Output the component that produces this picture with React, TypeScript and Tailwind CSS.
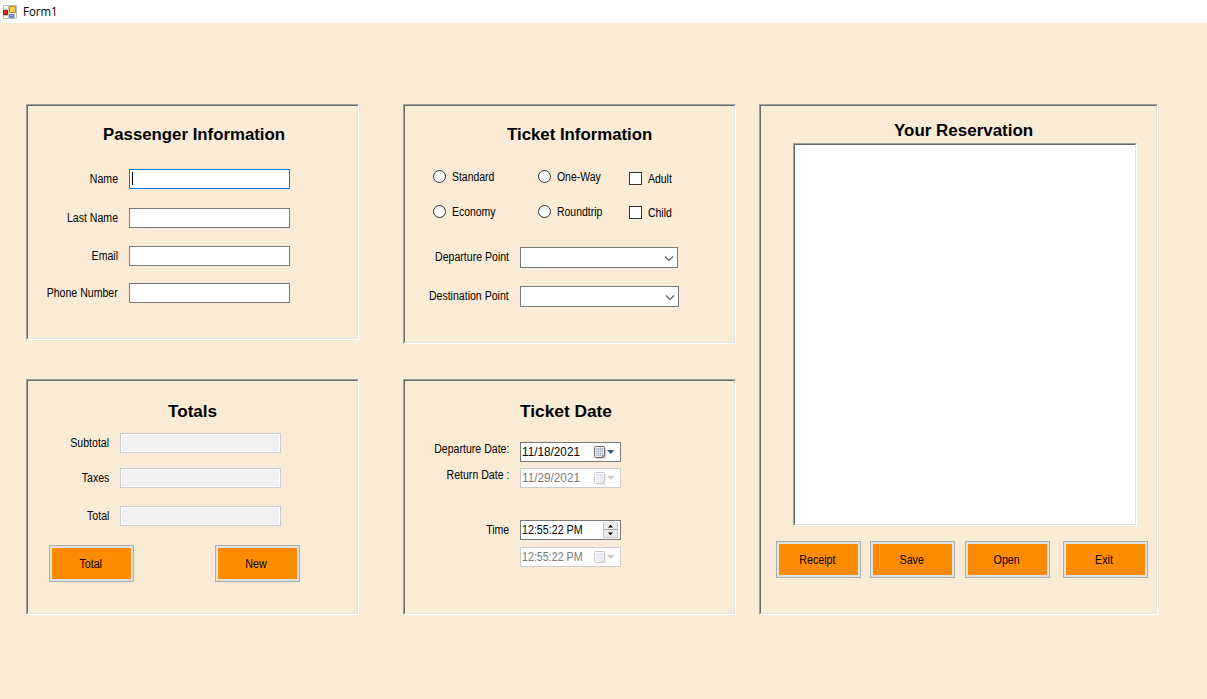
import type { ReactNode } from "react";

function Sunken({ className, inner, children }: { className: string; inner: string; children?: ReactNode }) {
  return (
    <div className={`flex flex-none border border-t-[#a0a0a0] border-l-[#a0a0a0] border-r-white border-b-white ${className}`}>
      <div className={`flex min-w-0 flex-1 flex-col border border-t-[#696969] border-l-[#696969] border-r-[#e3e3e3] border-b-[#e3e3e3] ${inner}`}>
        {children}
      </div>
    </div>
  );
}

function Title({ className, scale, children }: { className: string; scale: string; children: string }) {
  return (
    <h2 className={`flex h-5 flex-none items-center pt-0.5 text-base leading-5 font-bold whitespace-nowrap ${className}`}>
      <span className={`inline-block origin-left ${scale}`}>{children}</span>
    </h2>
  );
}

function Label({ className, children }: { className: string; children: string }) {
  return (
    <label className={`flex flex-none justify-end pr-px leading-[14px] whitespace-nowrap ${className}`}>
      <span className="inline-block origin-right scale-x-[0.88]">{children}</span>
    </label>
  );
}

function TextRow({ label, className, focused }: { label: string; className: string; focused?: boolean }) {
  return (
    <div className={`flex h-5 flex-none items-center gap-2.5 ${className}`}>
      <Label className="w-[91px]">{label}</Label>
      <div className={`flex h-5 w-[161px] items-center border bg-white pl-0.5 ${focused ? "border-[#0078d7]" : "border-[#7a7a7a]"}`}>
        {focused && <span className="mb-px h-[13px] w-px bg-black" />}
      </div>
    </div>
  );
}

function TotalRow({ label, className }: { label: string; className: string }) {
  return (
    <div className={`flex h-5 flex-none items-center gap-2.5 ${className}`}>
      <Label className="w-[82px]">{label}</Label>
      <div className="h-5 w-[161px] border border-[#cccccc] bg-white p-px">
        <div className="h-full bg-[#f0f0f0]" />
      </div>
    </div>
  );
}

function Button({ className = "", children }: { className?: string; children: string }) {
  return (
    <button className={`flex h-[37px] w-[85px] flex-none border border-[#adadad] bg-[#e1e1e1] p-0.5 ${className}`}>
      <span className="flex h-full flex-1 items-center justify-center bg-[#ff8c00] pr-0.5 leading-[14px]">
        <span className="inline-block scale-x-[0.89]">{children}</span>
      </span>
    </button>
  );
}

function Choice({ kind, className, children }: { kind: "radio" | "check"; className: string; children: string }) {
  return (
    <label className={`flex h-[13px] flex-none items-center gap-1.5 whitespace-nowrap ${className}`}>
      <span className={`size-[13px] flex-none border border-[#333333] bg-white ${kind === "radio" ? "rounded-full" : ""}`} />
      <span className="inline-block origin-left scale-x-[0.87] leading-[14px]">{children}</span>
    </label>
  );
}

function ComboRow({ label, className, width }: { label: string; className: string; width: string }) {
  return (
    <div className={`flex h-[21px] flex-none items-center gap-2.5 ${className}`}>
      <Label className="w-[105px] pb-px">{label}</Label>
      <div className={`flex h-[21px] items-center justify-end border border-[#7a7a7a] bg-white pt-px pr-[3px] ${width}`}>
        <svg width="10" height="7" viewBox="0 0 10 7" fill="none" stroke="#555555" strokeWidth="1.1">
          <path d="M1 1.5 5 5.5 9 1.5" />
        </svg>
      </div>
    </div>
  );
}

function CalendarIcon({ disabled }: { disabled?: boolean }) {
  return (
    <svg width="21" height="13" viewBox="0 0 21 13" className={disabled ? "opacity-35" : ""}>
      <path d="M2 2h9.5v10.5H2z" fill="#b9b4b2" />
      <path d="M.5 1.5q0-1 1-1h8q1 0 1 1v8l-2 2h-7q-1 0-1-1z" fill="#f4f4f8" stroke="#6c5f5d" />
      <path d="M2 2h7v7L8 10H2z" fill="#a9b6cc" />
      <path d="M2 4.5h7M2 6.5h7M2 8.5h7M3.5 2v8M5.5 2v8M7.5 2v8" stroke="#e3e8f2" strokeWidth=".6" />
      <path d="M8.5 11.5v-2h2z" fill="#fff" stroke="#6c5f5d" strokeWidth=".6" />
      <path d="M13 4h7.5l-3.75 4z" fill={disabled ? "#6f6f60" : "#3d5a80"} />
    </svg>
  );
}

function Spinner() {
  return (
    <svg width="15" height="16" viewBox="0 0 15 16">
      <path d="M0 0h15v16H0z" fill="#ececec" />
      <path d="M.5 1v14.5h14V1" fill="none" stroke="#c4c4c4" />
      <path d="M1 7.5h13" stroke="#a5a5a5" />
      <path d="M5 5.5h5L7.5 2.8zM5 10.5h5l-2.5 2.7z" fill="#000" />
    </svg>
  );
}

function Picker({ value, kind, disabled, scale }: { value: string; kind: "calendar" | "spin"; disabled?: boolean; scale: string }) {
  return (
    <div
      className={`flex h-5 w-[101px] flex-none items-center justify-between border bg-white pl-px ${
        disabled ? "border-[#cccccc] text-[#7a7a7a]" : "border-[#7a7a7a] text-black"
      } ${kind === "spin" ? "pr-0.5" : "pr-[5px]"}`}
    >
      <span className="w-[62px] leading-[14px] whitespace-nowrap">
        <span className={`inline-block origin-left ${scale}`}>{value}</span>
      </span>
      {kind === "spin" ? <Spinner /> : <CalendarIcon disabled={disabled} />}
    </div>
  );
}

function FormIcon() {
  return (
    <svg width="14" height="14" viewBox="0 0 14 14">
      <path d="M.5.5h13v13H.5z" fill="#fff" stroke="#bdbdbd" />
      <path d="M1 4.5h5M5.5 1v12M1 10.5h5M11.5 9v4" stroke="#c8c8c8" />
      <path d="M.5 5.5h4v4h-4z" fill="#d5331f" stroke="#8f1c12" />
      <path d="M6.5 1.5h6v6h-6z" fill="#ffd34d" stroke="#b8860b" />
      <path d="M6 9h5v4H6z" fill="#4c86e4" />
      <path d="M7 10h3v1H7z" fill="#9cc0f8" />
    </svg>
  );
}

export default function App() {
  return (
    <div className="flex h-[699px] w-[1207px] flex-col overflow-hidden bg-[#faebd7] font-['Liberation_Sans',Arial,sans-serif] text-xs text-black">
      <header className="flex h-[23px] flex-none items-center gap-1.5 bg-white pl-[3px]">
        <FormIcon />
        <span className="inline-block origin-left scale-x-95 font-['Open_Sans','Noto_Sans',sans-serif] leading-4">Form1</span>
      </header>

      <main className="flex flex-1 items-start pt-[81px] pl-[26px]">
        <div className="flex flex-none flex-col">
          <Sunken className="h-[236px] w-[333px]" inner="pt-[18px]">
            <Title className="pl-[75px]" scale="scale-x-[1.05]">Passenger Information</Title>
            <TextRow label="Name" className="mt-[25px]" focused />
            <TextRow label="Last Name" className="mt-[19px]" />
            <TextRow label="Email" className="mt-[18px]" />
            <TextRow label="Phone Number" className="mt-[17px]" />
          </Sunken>
          <Sunken className="mt-[39px] h-[236px] w-[333px]" inner="pt-5">
            <Title className="pl-[140px]" scale="scale-x-[1.07]">Totals</Title>
            <TotalRow label="Subtotal" className="mt-3" />
            <TotalRow label="Taxes" className="mt-[15px]" />
            <TotalRow label="Total" className="mt-[18px]" />
            <div className="mt-[19px] flex gap-[81px] pl-[21px]">
              <Button>Total</Button>
              <Button>New</Button>
            </div>
          </Sunken>
        </div>

        <div className="ml-11 flex flex-none flex-col">
          <Sunken className="h-[240px] w-[333px]" inner="pt-[18px]">
            <Title className="pl-[102px]" scale="scale-x-[1.05]">Ticket Information</Title>
            <div className="mt-[26px] flex h-[15px] flex-none items-start pl-7">
              <Choice kind="radio" className="w-[105px]">Standard</Choice>
              <Choice kind="radio" className="w-[91px]">One-Way</Choice>
              <Choice kind="check" className="mt-0.5">Adult</Choice>
            </div>
            <div className="mt-5 flex h-3.5 flex-none items-start pl-7">
              <Choice kind="radio" className="w-[105px]">Economy</Choice>
              <Choice kind="radio" className="w-[91px]">Roundtrip</Choice>
              <Choice kind="check" className="mt-px">Child</Choice>
            </div>
            <ComboRow label="Departure Point" className="mt-7" width="w-[158px]" />
            <ComboRow label="Destination Point" className="mt-[18px]" width="w-[159px]" />
          </Sunken>
          <Sunken className="mt-[35px] h-[236px] w-[333px]" inner="pt-5">
            <Title className="pl-[115px]" scale="scale-x-[1.08]">Ticket Date</Title>
            <div className="mt-[21px] flex h-5 flex-none gap-2.5">
              <Label className="w-[105px]">Departure Date:</Label>
              <Picker value="11/18/2021" kind="calendar" scale="scale-x-[0.98]" />
            </div>
            <div className="mt-1.5 flex h-5 flex-none gap-2.5">
              <Label className="w-[105px]">Return Date :</Label>
              <Picker value="11/29/2021" kind="calendar" scale="scale-x-[0.98]" disabled />
            </div>
            <div className="mt-8 flex h-5 flex-none items-center gap-2.5">
              <Label className="w-[105px]">Time</Label>
              <Picker value="12:55:22 PM" kind="spin" scale="scale-x-[0.89]" />
            </div>
            <div className="mt-[7px] flex h-5 flex-none pl-[115px]">
              <Picker value="12:55:22 PM" kind="calendar" scale="scale-x-[0.89]" disabled />
            </div>
          </Sunken>
        </div>

        <Sunken className="ml-[23px] h-[511px] w-[399px]" inner="pt-[14px]">
          <Title className="pl-[133px]" scale="scale-x-[1.06]">Your Reservation</Title>
          <Sunken className="mt-[3px] ml-8 h-[383px] w-[344px]" inner="bg-white" />
          <div className="mt-[15px] flex pl-[15px]">
            <Button>Receipt</Button>
            <Button className="ml-[9px]">Save</Button>
            <Button className="ml-2.5">Open</Button>
            <Button className="ml-[13px]">Exit</Button>
          </div>
        </Sunken>
      </main>
    </div>
  );
}
